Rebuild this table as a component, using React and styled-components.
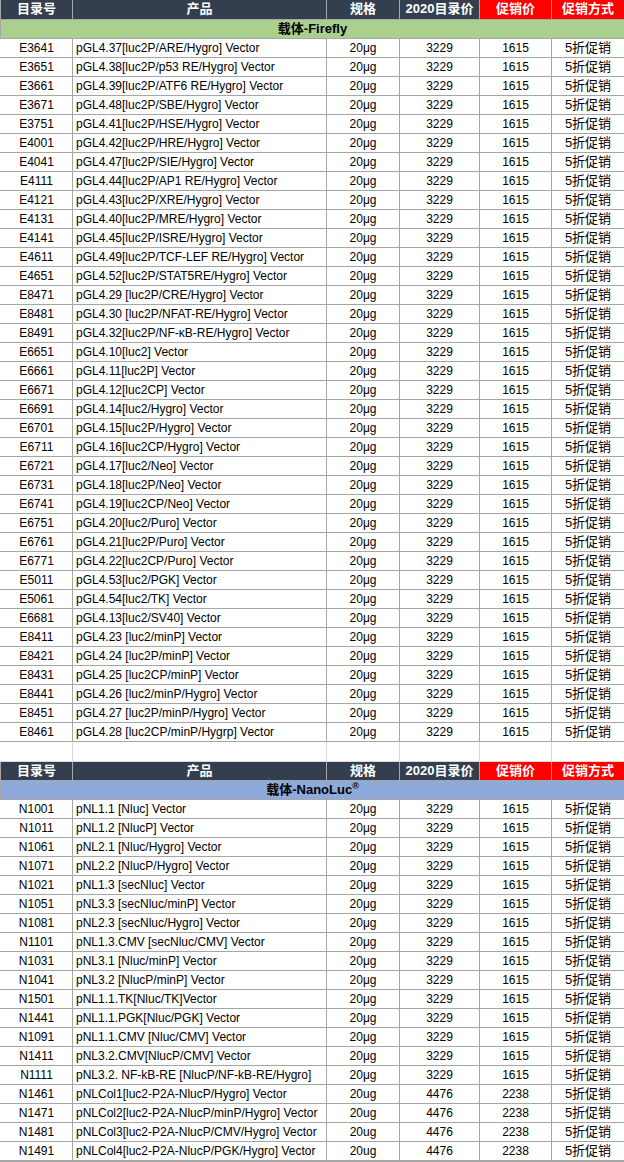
import React from 'react';
import styled, { createGlobalStyle } from 'styled-components';

const GlobalStyle = createGlobalStyle`
  html, body {
    margin: 0;
    padding: 0;
    background: #ffffff;
  }
  body {
    font-family: "Liberation Sans", Arial, "Noto Sans CJK SC", sans-serif;
  }
`;

const fireflyRows = [
  ['E3641', 'pGL4.37[luc2P/ARE/Hygro] Vector'],
  ['E3651', 'pGL4.38[luc2P/p53 RE/Hygro] Vector'],
  ['E3661', 'pGL4.39[luc2P/ATF6 RE/Hygro] Vector'],
  ['E3671', 'pGL4.48[luc2P/SBE/Hygro] Vector'],
  ['E3751', 'pGL4.41[luc2P/HSE/Hygro] Vector'],
  ['E4001', 'pGL4.42[luc2P/HRE/Hygro] Vector'],
  ['E4041', 'pGL4.47[luc2P/SIE/Hygro] Vector'],
  ['E4111', 'pGL4.44[luc2P/AP1 RE/Hygro] Vector'],
  ['E4121', 'pGL4.43[luc2P/XRE/Hygro] Vector'],
  ['E4131', 'pGL4.40[luc2P/MRE/Hygro] Vector'],
  ['E4141', 'pGL4.45[luc2P/ISRE/Hygro] Vector'],
  ['E4611', 'pGL4.49[luc2P/TCF-LEF RE/Hygro] Vector'],
  ['E4651', 'pGL4.52[luc2P/STAT5RE/Hygro] Vector'],
  ['E8471', 'pGL4.29 [luc2P/CRE/Hygro] Vector'],
  ['E8481', 'pGL4.30 [luc2P/NFAT-RE/Hygro] Vector'],
  ['E8491', 'pGL4.32[luc2P/NF-κB-RE/Hygro] Vector'],
  ['E6651', 'pGL4.10[luc2] Vector'],
  ['E6661', 'pGL4.11[luc2P] Vector'],
  ['E6671', 'pGL4.12[luc2CP] Vector'],
  ['E6691', 'pGL4.14[luc2/Hygro] Vector'],
  ['E6701', 'pGL4.15[luc2P/Hygro] Vector'],
  ['E6711', 'pGL4.16[luc2CP/Hygro] Vector'],
  ['E6721', 'pGL4.17[luc2/Neo] Vector'],
  ['E6731', 'pGL4.18[luc2P/Neo] Vector'],
  ['E6741', 'pGL4.19[luc2CP/Neo] Vector'],
  ['E6751', 'pGL4.20[luc2/Puro] Vector'],
  ['E6761', 'pGL4.21[luc2P/Puro] Vector'],
  ['E6771', 'pGL4.22[luc2CP/Puro] Vector'],
  ['E5011', 'pGL4.53[luc2/PGK] Vector'],
  ['E5061', 'pGL4.54[luc2/TK] Vector'],
  ['E6681', 'pGL4.13[luc2/SV40] Vector'],
  ['E8411', 'pGL4.23 [luc2/minP] Vector'],
  ['E8421', 'pGL4.24 [luc2P/minP] Vector'],
  ['E8431', 'pGL4.25 [luc2CP/minP] Vector'],
  ['E8441', 'pGL4.26 [luc2/minP/Hygro] Vector'],
  ['E8451', 'pGL4.27 [luc2P/minP/Hygro] Vector'],
  ['E8461', 'pGL4.28 [luc2CP/minP/Hygrp] Vector'],
].map(([no, name]) => ({ no, name, spec: '20μg', list: '3229', promo: '1615' }));

const nanoRows = [
  ['N1001', 'pNL1.1 [Nluc] Vector'],
  ['N1011', 'pNL1.2 [NlucP] Vector'],
  ['N1061', 'pNL2.1 [Nluc/Hygro] Vector'],
  ['N1071', 'pNL2.2 [NlucP/Hygro] Vector'],
  ['N1021', 'pNL1.3 [secNluc] Vector'],
  ['N1051', 'pNL3.3 [secNluc/minP] Vector'],
  ['N1081', 'pNL2.3 [secNluc/Hygro] Vector'],
  ['N1101', 'pNL1.3.CMV [secNluc/CMV] Vector'],
  ['N1031', 'pNL3.1 [Nluc/minP] Vector'],
  ['N1041', 'pNL3.2 [NlucP/minP] Vector'],
  ['N1501', 'pNL1.1.TK[Nluc/TK]Vector'],
  ['N1441', 'pNL1.1.PGK[Nluc/PGK] Vector'],
  ['N1091', 'pNL1.1.CMV [Nluc/CMV] Vector'],
  ['N1411', 'pNL3.2.CMV[NlucP/CMV] Vector'],
  ['N1111', 'pNL3.2. NF-kB-RE [NlucP/NF-kB-RE/Hygro]'],
]
  .map(([no, name]) => ({ no, name, spec: '20μg', list: '3229', promo: '1615' }))
  .concat(
    [
      ['N1461', 'pNLCol1[luc2-P2A-NlucP/Hygro] Vector'],
      ['N1471', 'pNLCol2[luc2-P2A-NlucP/minP/Hygro] Vector'],
      ['N1481', 'pNLCol3[luc2-P2A-NlucP/CMV/Hygro] Vector'],
      ['N1491', 'pNLCol4[luc2-P2A-NlucP/PGK/Hygro] Vector'],
    ].map(([no, name]) => ({ no, name, spec: '20ug', list: '4476', promo: '2238' })),
  );

const columns = [72, 254, 73, 80, 72, 73];

const Sheet = styled.table`
  width: 624px;
  table-layout: fixed;
  border-collapse: collapse;
  font-size: 12px;
  color: #000000;
  border-bottom: 2px solid #a6a6a6;
`;

const HeadCell = styled.td`
  height: 19px;
  padding: 0;
  box-sizing: border-box;
  text-align: center;
  vertical-align: middle;
  font-family: "Liberation Sans", Arial, "Noto Sans CJK SC", sans-serif;
  font-weight: bold;
  font-size: 13px;
  line-height: 18px;
  color: #ffffff;
  background: ${(p) => (p.$hot ? '#ff0000' : '#333f4f')};
  border: 1px solid #a6a6a6;
  border-top: none;
  white-space: nowrap;
`;

const SectionCell = styled.td`
  height: 19px;
  padding: 0;
  box-sizing: border-box;
  text-align: center;
  vertical-align: middle;
  font-weight: bold;
  font-size: 13px;
  line-height: 18px;
  background: ${(p) => p.$tone};
  border: 1px solid #a6a6a6;
`;

const Sup = styled.sup`
  font-size: 9px;
  line-height: 0;
  vertical-align: 5px;
`;

const Cell = styled.td`
  height: ${(p) => (p.$blank ? '20px' : '19px')};
  padding: ${(p) => (p.$left ? '0 0 0 3px' : '0')};
  box-sizing: border-box;
  text-align: ${(p) => (p.$left ? 'left' : 'center')};
  vertical-align: middle;
  font-size: ${(p) => (p.$cjk ? '13px' : '12px')};
  line-height: 18px;
  white-space: nowrap;
  overflow: hidden;
  border: 1px solid ${(p) => (p.$blank ? '#d9d9d9' : '#a6a6a6')};
  border-left-color: ${(p) => (p.$first ? '#ffffff' : undefined)};
`;

const headers = ['目录号', '产品', '规格', '2020目录价', '促销价', '促销方式'];

function HeaderRow() {
  return (
    <tr>
      {headers.map((h, i) => (
        <HeadCell key={h} $hot={i >= 4}>{h}</HeadCell>
      ))}
    </tr>
  );
}

function DataRow({ row }) {
  return (
    <tr>
      <Cell $first>{row.no}</Cell>
      <Cell $left>{row.name}</Cell>
      <Cell>{row.spec}</Cell>
      <Cell>{row.list}</Cell>
      <Cell>{row.promo}</Cell>
      <Cell $cjk>5折促销</Cell>
    </tr>
  );
}

export default function App() {
  return (
    <>
      <GlobalStyle />
      <Sheet>
        <colgroup>
          {columns.map((w, i) => (
            // eslint-disable-next-line react/no-array-index-key
            <col key={i} style={{ width: w }} />
          ))}
        </colgroup>
        <tbody>
          <HeaderRow />
          <tr>
            <SectionCell colSpan={6} $tone="#a9d08e">载体-Firefly</SectionCell>
          </tr>
          {fireflyRows.map((row) => (
            <DataRow key={row.no} row={row} />
          ))}
          <tr>
            {columns.map((w, i) => (
              // eslint-disable-next-line react/no-array-index-key
              <Cell key={i} $blank $first={i === 0} />
            ))}
          </tr>
          <HeaderRow />
          <tr>
            <SectionCell colSpan={6} $tone="#8eaadb">
              载体-NanoLuc<Sup>®</Sup>
            </SectionCell>
          </tr>
          {nanoRows.map((row) => (
            <DataRow key={row.no} row={row} />
          ))}
        </tbody>
      </Sheet>
    </>
  );
}
